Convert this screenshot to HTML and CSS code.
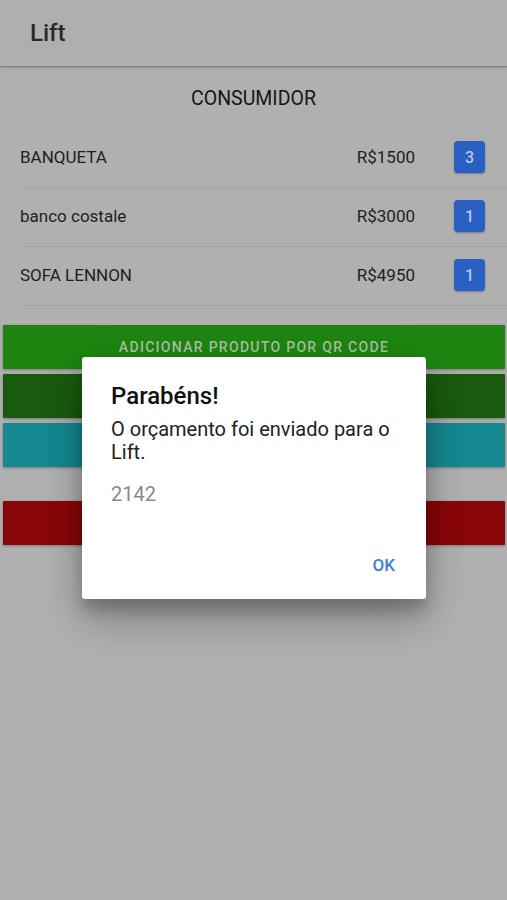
FILE: index.html
```html
<!DOCTYPE html>
<html lang="pt-BR">
<head>
<meta charset="utf-8">
<title>Lift</title>
<link rel="stylesheet" href="styles.css">
</head>
<body>
<div class="app">
  <header class="toolbar"><span class="toolbar-title">Lift</span></header>
  <main class="content">
    <h2 class="section-title">CONSUMIDOR</h2>
    <ul class="items">
      <li class="item"><span class="item-name">BANQUETA</span><span class="item-price">R$1500</span><span class="badge">3</span></li>
      <li class="item"><span class="item-name">banco costale</span><span class="item-price">R$3000</span><span class="badge">1</span></li>
      <li class="item"><span class="item-name">SOFA LENNON</span><span class="item-price">R$4950</span><span class="badge">1</span></li>
    </ul>
    <div class="actions">
      <button class="btn btn-green">ADICIONAR PRODUTO POR QR CODE</button>
      <button class="btn btn-darkgreen" aria-label="Enviar orçamento"></button>
      <button class="btn btn-teal" aria-label="Novo orçamento"></button>
      <button class="btn btn-red btn-spaced" aria-label="Sair"></button>
    </div>
  </main>
</div>
<div class="dialog" role="dialog">
  <h3 class="dialog-title">Parabéns!</h3>
  <p class="dialog-message">O orçamento foi enviado para o Lift.</p>
  <p class="dialog-code">2142</p>
  <div class="dialog-actions"><button class="dialog-ok">OK</button></div>
</div>
</body>
</html>
```
FILE: styles.css
```css
* { box-sizing: border-box; }
html, body { margin: 0; padding: 0; }
body {
  background: #b0b0b0;
  font-family: Roboto, "Noto Sans", "Liberation Sans", sans-serif;
  color: #1c1c1c;
  width: 507px;
  height: 900px;
  overflow: hidden;
}
.app { display: flex; flex-direction: column; }
.toolbar {
  height: 66px;
  display: flex;
  align-items: center;
  padding-left: 30px;
  background: #afafaf;
  box-shadow: 0 1px 1px rgba(0,0,0,0.18), 0 2px 3px rgba(0,0,0,0.12);
  position: relative;
  z-index: 1;
}
.toolbar-title {
  font-size: 24px;
  font-weight: 500;
  color: #2a2a2a;
}
.content { display: flex; flex-direction: column; }
.section-title {
  margin: 0;
  height: 63px;
  display: flex;
  align-items: center;
  justify-content: center;
  font-size: 19.5px;
  font-weight: 400;
  color: #161616;
  padding-top: 1px;
}
.items { list-style: none; margin: 0; padding: 0 0 0 20px; }
.item {
  height: 59px;
  display: flex;
  align-items: center;
  border-bottom: 1px solid #a3a3a3;
  font-size: 17px;
  color: #1e1e1e;
  padding-bottom: 2px;
}
.item-name { flex: 1; }
.item-price { margin-right: 39px; }
.badge {
  width: 31px;
  height: 32px;
  border-radius: 4px;
  background: #2a5fc4;
  color: #b9c6e0;
  font-size: 16px;
  font-weight: 500;
  display: flex;
  align-items: center;
  justify-content: center;
  margin-right: 22px;
  box-shadow: 0 1px 2px rgba(0,0,0,0.3);
}
.actions {
  display: flex;
  flex-direction: column;
  gap: 5px;
  padding: 19px 2px 0 3px;
}
.btn {
  height: 44px;
  border: 0;
  border-radius: 1px;
  font-family: Roboto, "Liberation Sans", sans-serif;
  font-size: 14px;
  font-weight: 500;
  letter-spacing: 1.3px;
  box-shadow: 0 1px 3px rgba(0,0,0,0.3);
}
.btn-green { background: #1e8610; color: #a8c1a2; }
.btn-darkgreen { background: #1a5a0e; color: #8aa084; }
.btn-teal { background: #168890; color: #9ec4c6; }
.btn-red { background: #8a0709; color: #c4999a; }
.btn-spaced { margin-top: 29px; }
.dialog {
  position: absolute;
  left: 82px;
  top: 357px;
  width: 344px;
  height: 242px;
  background: #ffffff;
  border-radius: 3px;
  padding: 23px 29px 0 29px;
  display: flex;
  flex-direction: column;
  box-shadow: 0 24px 38px rgba(0,0,0,0.16), 0 9px 46px rgba(0,0,0,0.14), 0 11px 15px rgba(0,0,0,0.2);
}
.dialog-title {
  margin: 0;
  font-size: 24px;
  font-weight: 500;
  color: #111;
  line-height: 32px;
}
.dialog-message {
  margin: 6px 0 0;
  font-size: 20px;
  line-height: 23px;
  color: #222;
}
.dialog-code {
  margin: 18px 0 0;
  font-size: 20px;
  line-height: 24px;
  color: #8a8a8a;
}
.dialog-actions {
  margin-top: auto;
  display: flex;
  justify-content: flex-end;
  padding-bottom: 24px;
}
.dialog-ok {
  border: 0;
  background: transparent;
  padding: 0 2px 0 0;
  font-family: Roboto, "Liberation Sans", sans-serif;
  font-size: 17px;
  font-weight: 500;
  color: #3b7ee0;
  line-height: 20px;
}
```
